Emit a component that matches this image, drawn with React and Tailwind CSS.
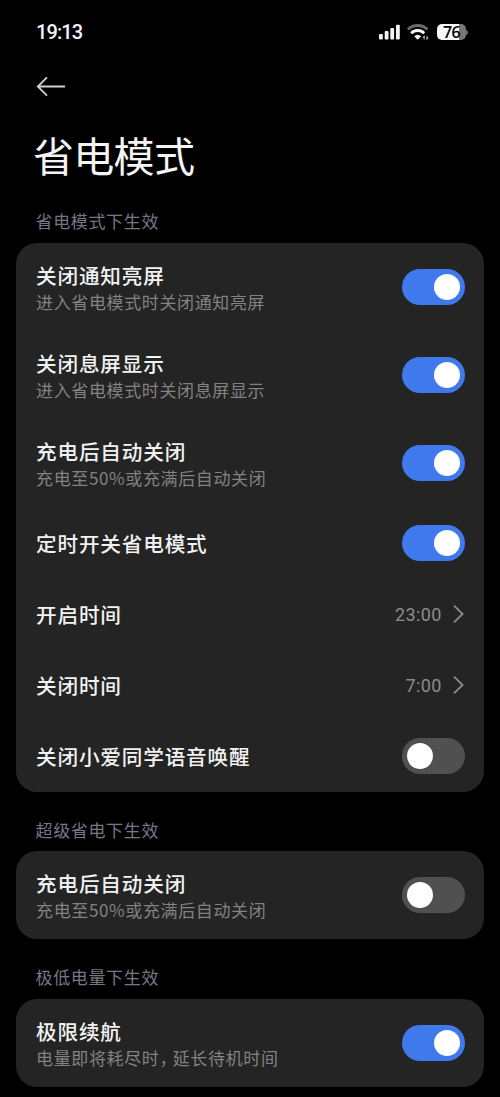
import { useState } from "react";

function Switch({ initial }) {
  const [on, setOn] = useState(initial);
  return (
    <button
      type="button"
      role="switch"
      aria-checked={on}
      onClick={() => setOn(!on)}
      className={
        on
          ? "flex h-9 w-[62.4px] shrink-0 items-center justify-end rounded-full bg-[#4079eb] px-[5px]"
          : "flex h-9 w-[62.4px] shrink-0 items-center justify-start rounded-full bg-[#505050] px-[5px]"
      }
    >
      <span className="size-[26px] rounded-full bg-white" />
    </button>
  );
}

function Chevron() {
  return (
    <svg className="ml-[11px] mr-px h-[20px] w-[11px]" viewBox="0 0 11 20" fill="none" stroke="#8c8c8c" strokeWidth="1.8">
      <path d="M1 1.6 L9.6 10 L1 18.4" />
    </svg>
  );
}

function Row({ title, desc, on, value }) {
  return (
    <div className={desc ? "flex h-[88.2px] items-center justify-between" : "flex h-[71.1px] items-center justify-between"}>
      <div className={desc ? "flex flex-col pt-[3px]" : "flex flex-col"}>
        <span className="text-[20.6px] leading-[26px] font-medium tracking-[0.85px] text-[#f2f2f2]">{title}</span>
        {desc && <span className="text-[17px] leading-[27px] tracking-[0.63px] text-[#828282]">{desc}</span>}
      </div>
      {value ? (
        <div className="flex items-center">
          <span className="font-['Roboto','Noto_Sans_CJK_SC',sans-serif] text-[18px] tracking-[0.4px] text-[#8c8c8c]">{value}</span>
          <Chevron />
        </div>
      ) : (
        <Switch initial={on} />
      )}
    </div>
  );
}

function Heading({ children }) {
  return <h2 className="px-5 text-[17px] leading-[26px] tracking-[0.65px] text-[#787585]">{children}</h2>;
}

function Card({ children }) {
  return <div className="rounded-[21px] bg-[#242424] pr-[19.6px] pl-[20.5px]">{children}</div>;
}

function StatusBar() {
  return (
    <div className="flex h-16 items-center justify-between pl-9 pr-8">
      <span className="font-['Roboto','Noto_Sans_CJK_SC',sans-serif] text-[20px] font-medium tracking-[-0.9px] text-[#f4f4f4]">19:13</span>
      <div className="flex items-center">
        <svg className="h-4 w-[22px]" viewBox="0 0 22 16" fill="#f6f6f6">
          <rect x="0" y="10" width="3.8" height="5.5" rx="1" />
          <rect x="5.7" y="7" width="3.8" height="8.5" rx="1" />
          <rect x="11.3" y="4" width="3.8" height="11.5" rx="1" />
          <rect x="17" y="0.8" width="3.8" height="14.7" rx="1" />
        </svg>
        <svg className="ml-[6px] h-4 w-[24px]" viewBox="0 0 24 16" fill="none">
          <path d="M1 5.4 C6.2 0.2 15.2 0.2 20.4 5.4" stroke="#6a6a6a" strokeWidth="2.9" />
          <path d="M4.2 9.3 C7.8 5.6 13.6 5.6 17.2 9.3" stroke="#fafafa" strokeWidth="2.9" />
          <path d="M7.2 12.2 Q10.7 9.2 14.2 12.2 L10.7 15.8 Z" fill="#fafafa" />
          <path d="M17.2 15.5 V12.5 L16 13.7 M20 12 V15 L21.2 13.8" stroke="#bdbdbd" strokeWidth="1.1" />
        </svg>
        <div className="ml-[6px] flex items-center">
          <div className="flex h-4 w-[29px] items-center justify-center rounded-[5px] bg-linear-to-r from-[#f8f8f8] from-76% to-[#777777] to-76% font-['Open_Sans','Noto_Sans_CJK_SC',sans-serif] text-[16px] leading-4 font-semibold tracking-[-0.6px] text-black">
            76
          </div>
          <span className="h-[5px] w-[2px] rounded-r-full bg-[#666666]" />
        </div>
      </div>
    </div>
  );
}

export default function App() {
  return (
    <main className="h-[1097px] w-[500px] overflow-hidden bg-black font-['Noto_Sans_CJK_SC',sans-serif]">
      <StatusBar />
      <div className="flex h-[45px] items-center pl-9">
        <svg className="h-[20px] w-[30px]" viewBox="0 0 30 20" fill="none" stroke="#d2cfd2" strokeWidth="1.8">
          <path d="M29 9.5 H2 M11 0.3 L1.8 9.5 L11 18.7" />
        </svg>
      </div>
      <h1 className="mt-[15px] pl-[33px] text-[41px] leading-[60px] font-normal tracking-[-0.7px] text-[#f4f4f4]">省电模式</h1>
      <div className="pr-[15.6px] pl-[15.5px] pt-6">
        <Heading>省电模式下生效</Heading>
        <div className="mt-[9px]">
          <Card>
            <Row title="关闭通知亮屏" desc="进入省电模式时关闭通知亮屏" on />
            <Row title="关闭息屏显示" desc="进入省电模式时关闭息屏显示" on />
            <Row title="充电后自动关闭" desc="充电至50%或充满后自动关闭" on />
            <Row title="定时开关省电模式" on />
            <Row title="开启时间" value="23:00" />
            <Row title="关闭时间" value="7:00" />
            <Row title="关闭小爱同学语音唤醒" on={false} />
          </Card>
        </div>
        <div className="mt-[25px] mb-[8px]">
          <Heading>超级省电下生效</Heading>
        </div>
        <Card>
          <Row title="充电后自动关闭" desc="充电至50%或充满后自动关闭" on={false} />
        </Card>
        <div className="mt-[25px] mb-[8.5px]">
          <Heading>极低电量下生效</Heading>
        </div>
        <Card>
          <Row
            title="极限续航"
            desc={
              <>
                电量即将耗尽时<span className="tracking-[-3.7px]">，</span>延长待机时间
              </>
            }
            on
          />
        </Card>
      </div>
    </main>
  );
}
